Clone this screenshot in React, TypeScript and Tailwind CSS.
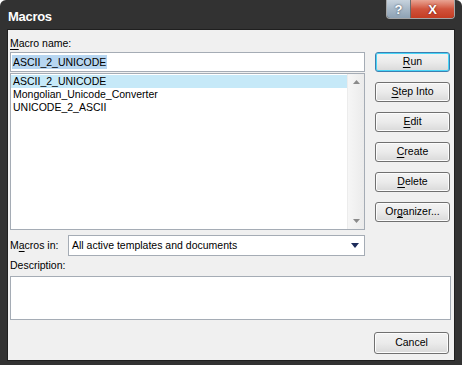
import type { ReactNode } from 'react';

// Word "Macros" dialog, Windows 7 Basic look.

const FONT = "font-['Liberation_Sans',Arial,sans-serif]";

function Key({ children }: { children: ReactNode }) {
  return <span className="underline underline-offset-[2px]">{children}</span>;
}

function DlgButton({ children, primary = false, h = 'h-[20px]' }: { children: ReactNode; primary?: boolean; h?: string }) {
  return (
    <button
      type="button"
      className={[
        'flex w-[75px] shrink-0 items-center justify-center rounded-[3px] border bg-gradient-to-b from-[#f3f3f3] via-[#ebebeb] to-[#d9d9d9] text-[10.5px] text-black',
        h,
        primary
          ? 'border-[#3c7fb1] shadow-[inset_0_0_0_1px_#48d5f7]'
          : 'border-[#707070] shadow-[inset_0_0_0_1px_#fcfcfc]',
      ].join(' ')}
    >
      {children}
    </button>
  );
}

function TitleButtons() {
  return (
    <div className="flex h-[19px] overflow-hidden rounded-b-[4px] border border-t-0 border-[#d8d8d8]/70">
      <div className="flex w-[24px] items-center justify-center border-r border-[#6a6a6a] bg-gradient-to-b from-[#c7d3de] via-[#a8b8c7] to-[#8ea2b4]">
        <span className="text-[13px] font-bold leading-none text-white [text-shadow:0_0_2px_#2c3e50]">?</span>
      </div>
      <div className="flex w-[43px] items-center justify-center bg-gradient-to-b from-[#e8a493] via-[#d0533c] to-[#c43c22]">
        <span className="text-[13px] font-bold leading-none text-white [text-shadow:0_0_2px_#5a1207]">X</span>
      </div>
    </div>
  );
}

function ScrollArrow({ down = false }: { down?: boolean }) {
  return (
    <svg width="7" height="4" viewBox="0 0 7 4" aria-hidden>
      <path d={down ? 'M0 0h7L3.5 4z' : 'M0 4h7L3.5 0z'} fill="#8a8a8a" />
    </svg>
  );
}

export default function App() {
  const macros = ['ASCII_2_UNICODE', 'Mongolian_Unicode_Converter', 'UNICODE_2_ASCII'];

  return (
    <div className={`h-[365px] w-[462px] bg-white ${FONT}`}>
      <div className="flex h-full w-full flex-col rounded-t-[6px] bg-[#323232]">
        {/* Title bar */}
        <div className="flex h-[29px] shrink-0 items-start justify-between pl-[8px] pr-[7px]">
          <span className="pt-[9px] text-[13px] font-bold leading-[15px] tracking-[-0.3px] text-white">Macros</span>
          <TitleButtons />
        </div>

        {/* Client area */}
        <div className="mx-[7px] h-[332px] border border-[#1f1f1f] bg-[#f0f0f0] text-[10.5px] text-black">
          <div className="h-[22px] pl-[2px] pt-[6px] leading-[14px]">
            <Key>M</Key>acro name:
          </div>

          <div className="flex pl-[2px]">
            <div className="flex w-[355px] flex-col">
              <div className="flex h-[20px] items-center border border-[#a5acb5] bg-white px-[1px]">
                <span className="bg-[#b7d6f1] px-[1px] leading-[14px]">ASCII_2_UNICODE</span>
              </div>
              <div className="mt-[1px] flex h-[157px] border border-[#a5acb5] bg-white">
                <div className="flex-1 pt-[1px]">
                  {macros.map((m, i) => (
                    <div
                      key={m}
                      className={`h-[13px] pl-[2px] leading-[13px] ${i === 0 ? 'bg-[#c6e9f8]' : ''}`}
                    >
                      {m}
                    </div>
                  ))}
                </div>
                <div className="flex w-[17px] flex-col items-center justify-between border-l border-[#ececec] bg-gradient-to-r from-[#f6f6f6] to-[#ebebeb] py-[6px]">
                  <ScrollArrow />
                  <ScrollArrow down />
                </div>
              </div>
            </div>

            <div className="ml-[10px] flex flex-col gap-[10px]">
              <DlgButton primary>
                <span><Key>R</Key>un</span>
              </DlgButton>
              <DlgButton>
                <span><Key>S</Key>tep Into</span>
              </DlgButton>
              <DlgButton>
                <span><Key>E</Key>dit</span>
              </DlgButton>
              <DlgButton>
                <span><Key>C</Key>reate</span>
              </DlgButton>
              <DlgButton>
                <span><Key>D</Key>elete</span>
              </DlgButton>
              <DlgButton>
                <span>Or<Key>g</Key>anizer...</span>
              </DlgButton>
            </div>
          </div>

          <div className="mt-[5px] flex h-[21px] items-center pl-[2px]">
            <span className="w-[58px]">
              M<Key>a</Key>cros in:
            </span>
            <div className="flex h-full w-[297px] items-center justify-between border border-[#a5acb5] bg-white pl-[3px] pr-[5px]">
              <span>All active templates and documents</span>
              <svg width="8" height="5" viewBox="0 0 8 5" aria-hidden>
                <path d="M0 0h8L4 5z" fill="#1c2b5a" />
              </svg>
            </div>
          </div>

          <div className="flex h-[20px] items-center pl-[2px]">Description:</div>

          <div className="ml-[2px] h-[44px] w-[441px] border border-[#a5acb5] bg-white" />

          <div className="mt-[12px] flex justify-end pr-[5px]">
            <DlgButton h="h-[22px]">Cancel</DlgButton>
          </div>
        </div>
      </div>
    </div>
  );
}
